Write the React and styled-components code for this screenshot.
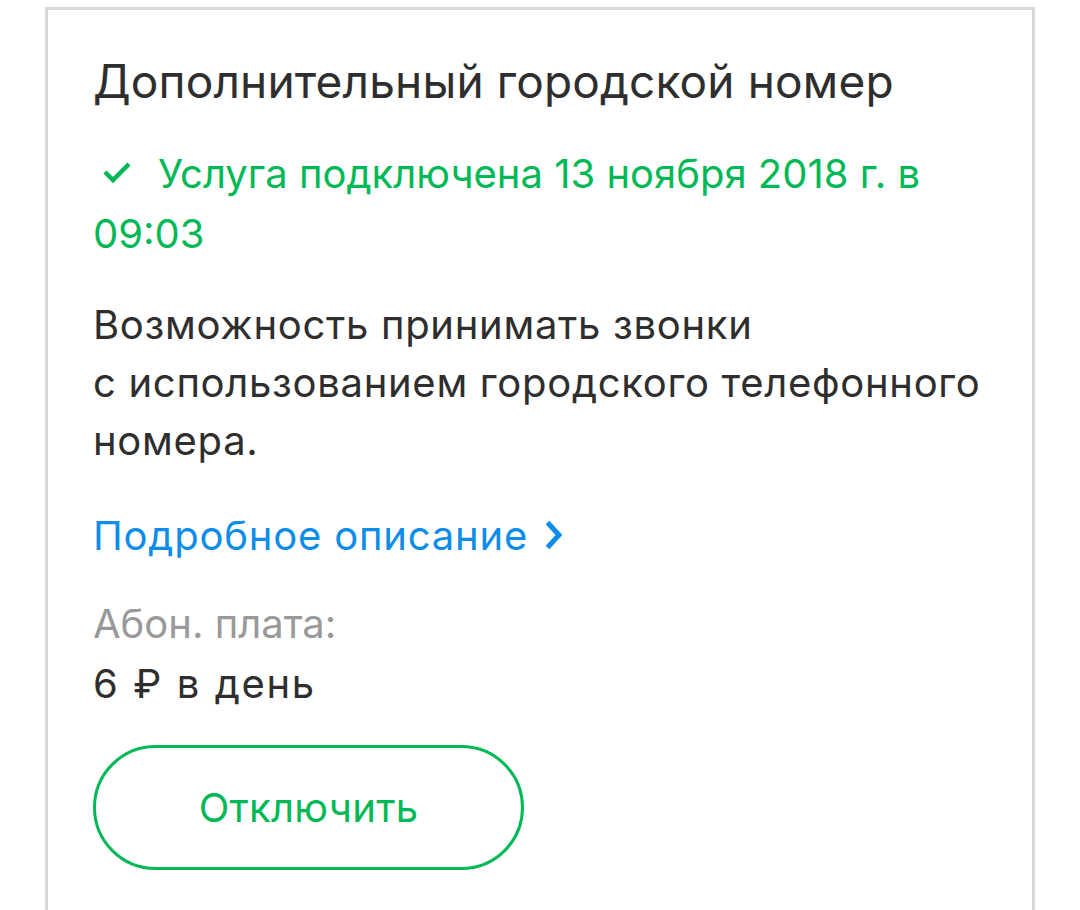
import styled, { createGlobalStyle } from "styled-components";

const GlobalStyle = createGlobalStyle`
  html, body {
    margin: 0;
    padding: 0;
    background: #ffffff;
    overflow: hidden;
  }
  body {
    font-family: "Inter", "Roboto", "Liberation Sans", sans-serif;
    color: #333333;
  }
`;

const Page = styled.div`
  padding: 7px 0 0 45px;
  width: 1080px;
  height: 910px;
  box-sizing: border-box;
`;

const Card = styled.div`
  width: 990px;
  box-sizing: border-box;
  border: 3px solid #d9d9d9;
  padding: 43px 47px 80px 45px;
  display: flex;
  flex-direction: column;
  align-items: flex-start;
`;

const Title = styled.h2`
  margin: 0;
  font-size: 46px;
  line-height: 56px;
  font-weight: 400;
  letter-spacing: 0.15px;
  color: #2e2e2e;
`;

const Status = styled.div`
  margin-top: 35px;
  font-size: 40px;
  line-height: 60px;
  color: #00b956;
`;

const Check = styled.svg`
  width: 30px;
  height: 24px;
  margin: 0 26px 0 9px;
  vertical-align: 4px;
`;

const Text = styled.p`
  margin: ${(props) => props.mt || "0"} 0 0 0;
  font-size: 40px;
  line-height: ${(props) => props.lh || "58px"};
  letter-spacing: ${(props) => props.ls || "0.7px"};
  word-spacing: ${(props) => props.ws || "0"};
  color: ${(props) => props.color || "#2e2e2e"};
`;

const Link = styled.a`
  margin-top: 37px;
  font-size: 40px;
  line-height: 58px;
  letter-spacing: 0.8px;
  color: #0d8ce8;
  text-decoration: none;
  display: inline-flex;
  align-items: center;
  cursor: pointer;
`;

const Chevron = styled.svg`
  width: 19px;
  height: 32px;
  margin: 0 0 3px 16px;
`;

const Button = styled.button`
  margin-top: 31px;
  width: 431px;
  height: 125px;
  box-sizing: border-box;
  border: 3px solid #00b956;
  border-radius: 63px;
  background: #ffffff;
  color: #00b956;
  font-family: inherit;
  font-size: 40px;
  letter-spacing: 0.3px;
  cursor: pointer;
`;

export default function App() {
  return (
    <Page>
      <GlobalStyle />
      <Card>
        <Title>Дополнительный городской номер</Title>
        <Status>
          <Check viewBox="0 0 30 24">
            <path d="M3 12 L11 20 L27 4" fill="none" stroke="#00b956" strokeWidth="4.5" />
          </Check>
          Услуга подключена 13 ноября 2018 г. в<br />
          09:03
        </Status>
        <Text mt="32px">
          Возможность принимать звонки<br />
          с использованием городского телефонного<br />
          номера.
        </Text>
        <Link>
          Подробное описание
          <Chevron viewBox="0 0 19 32">
            <path d="M3.5 3.5 L15 16 L3.5 28.5" fill="none" stroke="#0d8ce8" strokeWidth="5" />
          </Chevron>
        </Link>
        <Text mt="29px" lh="60px" ls="0" color="#999999">Абон. плата:</Text>
        <Text lh="60px" ls="1.6px" ws="1px">6 ₽ в день</Text>
        <Button>Отключить</Button>
      </Card>
    </Page>
  );
}
